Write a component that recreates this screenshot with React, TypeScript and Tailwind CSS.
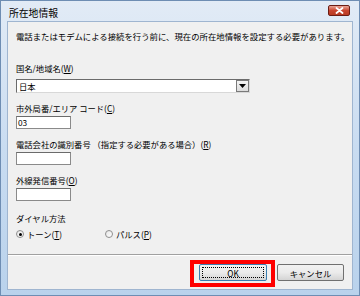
import React from 'react';

const font = { fontFamily: '"Noto Sans CJK JP", "Noto Sans", sans-serif' };

function Label({ text, keyChar, tail = '' }: { text: string; keyChar: string; tail?: string }) {
    return (
        <div className="h-[11px] leading-[11px] text-[8.3px] text-black whitespace-nowrap">
            {text}(<span className="underline">{keyChar}</span>){tail}
        </div>
    );
}

function TextBox({ value = '' }: { value?: string }) {
    return (
        <div className="w-[55px] h-[13px] bg-white border border-[#8a8a8a] border-t-[#6b6b6b] text-[8.3px] leading-[11px] pl-[1px] text-black">
            {value}
        </div>
    );
}

function Radio({ checked, text, keyChar }: { checked?: boolean; text: string; keyChar: string }) {
    return (
        <div className="flex items-center h-[10px]">
            <div className="w-[8px] h-[8px] rounded-full border border-[#8f8f8f] bg-gradient-to-br from-[#e6e6e6] to-white flex items-center justify-center">
                {checked && <div className="w-[3px] h-[3px] rounded-full bg-black" />}
            </div>
            <span className="ml-[3px] text-[8.3px] leading-[10px] text-black whitespace-nowrap">
                {text}(<span className="underline">{keyChar}</span>)
            </span>
        </div>
    );
}

export default function App() {
    return (
        <div className="w-[360px] h-[296px] flex flex-col border border-[#6e8db3] bg-gradient-to-b from-[#e2ebf6] via-[#c9dcf1] to-[#b9d2ec]" style={font}>
            {/* Title bar */}
            <div className="h-[20px] flex items-center justify-between pl-[8px] pr-[9px]">
                <span className="text-[9.8px] leading-[12px] text-black mt-[4px]">所在地情報</span>
                <div className="w-[22px] h-[11px] mt-[-2px] rounded-[2px] border border-[#6b1d14] bg-gradient-to-b from-[#e8a497] via-[#c9452f] to-[#b83a22] flex items-center justify-center">
                    <svg width="9" height="7" viewBox="0 0 9 7">
                        <path d="M1.5 1 L7.5 6 M7.5 1 L1.5 6" stroke="#fff" strokeWidth="1.8" strokeLinecap="round" />
                    </svg>
                </div>
            </div>

            {/* Client area */}
            <div className="flex-1 mx-[6px] mb-[5px] bg-[#f0f0f0] border border-[#9fb5d0] flex flex-col">
                <div className="pl-[8px] pt-[9px] flex flex-col">
                    <div className="h-[10px] leading-[10px] text-[8.4px] text-black whitespace-nowrap">
                        電話またはモデムによる接続を行う前に、現在の所在地情報を設定する必要があります。
                    </div>

                    <div className="mt-[22px]">
                        <Label text="国名/地域名" keyChar="W" />
                    </div>
                    <div className="mt-[5px] w-[234px] h-[14px] bg-white border border-[#6b6b6b] border-r-[#d8d8d8] border-b-[#d8d8d8] flex items-center">
                        <span className="flex-1 pl-[2px] text-[8.3px] leading-[11px] text-black">日本</span>
                        <div className="w-[13px] h-[12px] border border-[#7a7a7a] bg-gradient-to-b from-[#f4f4f4] to-[#dcdcdc] flex items-center justify-center">
                            <svg width="7" height="4" viewBox="0 0 7 4">
                                <path d="M0 0 H7 L3.5 4 Z" fill="#000" />
                            </svg>
                        </div>
                    </div>

                    <div className="mt-[10px]">
                        <Label text="市外局番/エリア コード" keyChar="C" />
                    </div>
                    <div className="mt-[2px]">
                        <TextBox value="03" />
                    </div>

                    <div className="mt-[10px]">
                        <Label text="電話会社の識別番号 （指定する必要がある場合）" keyChar="R" />
                    </div>
                    <div className="mt-[2px]">
                        <TextBox />
                    </div>

                    <div className="mt-[10px]">
                        <Label text="外線発信番号" keyChar="O" />
                    </div>
                    <div className="mt-[2px]">
                        <TextBox />
                    </div>

                    <div className="mt-[12px] h-[11px] leading-[11px] text-[8.3px] text-black">ダイヤル方法</div>
                    <div className="mt-[5px] flex">
                        <div className="w-[89px]">
                            <Radio checked text="トーン" keyChar="T" />
                        </div>
                        <Radio text="パルス" keyChar="P" />
                    </div>
                </div>

                <div className="flex-1" />
                <div className="h-[1px] bg-[#a0a0a0]" />
                <div className="h-[1px] bg-white" />

                {/* Buttons */}
                <div className="h-[33px] flex items-start justify-end pr-[8px] pt-[8px] gap-[10px]">
                    <div className="relative">
                        <div className="w-[68px] h-[17px] rounded-[2px] border border-[#3c7fb1] bg-gradient-to-b from-[#f2f2f2] via-[#ebebeb] to-[#d4d4d4] p-[2px]">
                            <div className="w-full h-full border border-dotted border-black flex items-center justify-center text-[8.3px] leading-[10px] text-black">
                                OK
                            </div>
                        </div>
                        <div className="absolute left-[-9px] right-[-8px] top-[-4px] bottom-[-6px] border-[4px] border-[#ff0000]" />
                    </div>
                    <div className="w-[67px] h-[17px] rounded-[2px] border border-[#707070] bg-gradient-to-b from-[#f2f2f2] via-[#ebebeb] to-[#d4d4d4] flex items-center justify-center text-[8.3px] leading-[10px] text-black">
                        キャンセル
                    </div>
                </div>
            </div>
        </div>
    );
}
